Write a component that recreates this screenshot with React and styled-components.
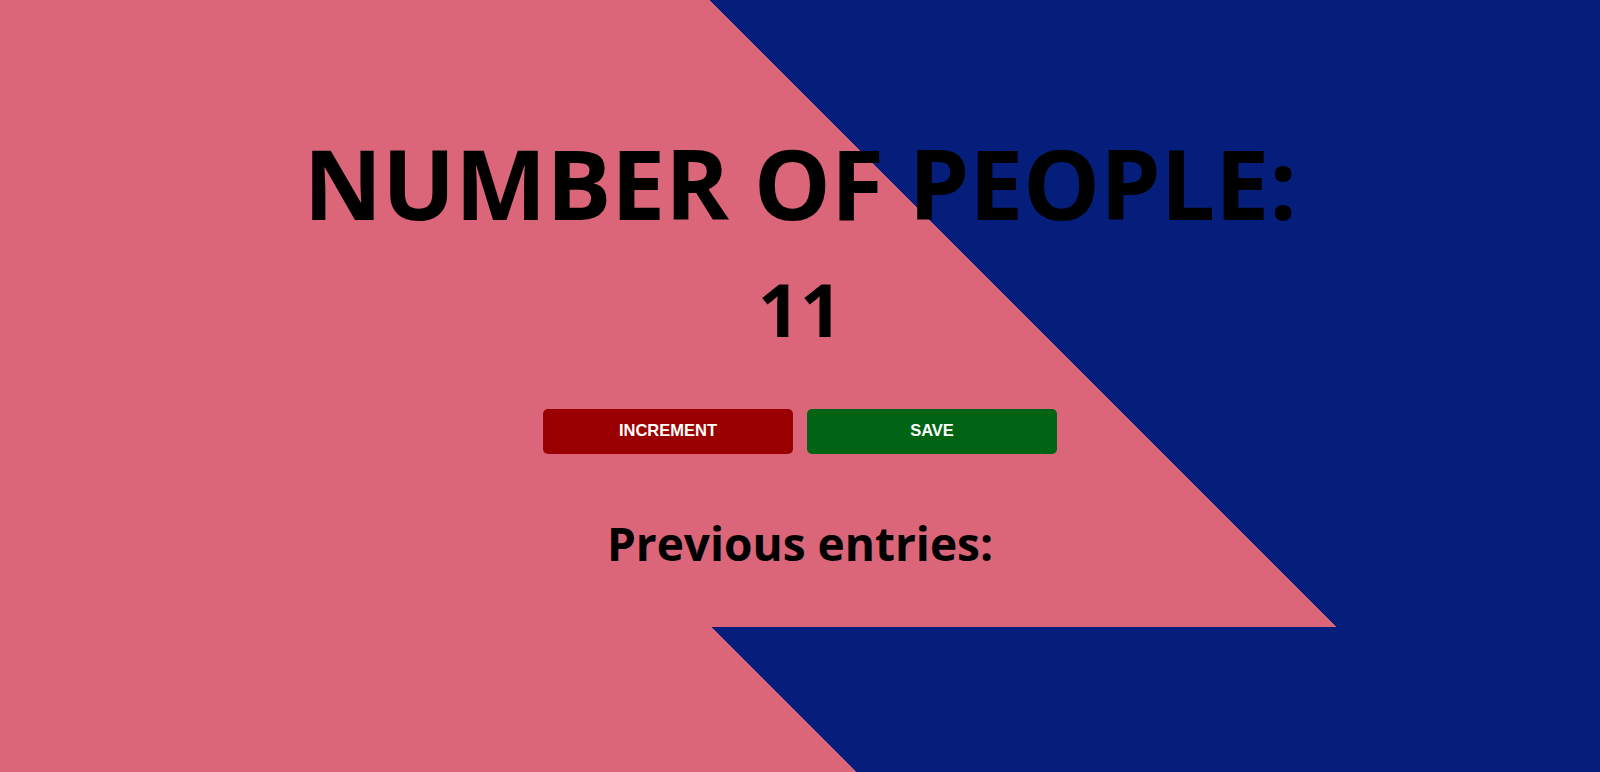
import { useState } from "react";
import styled, { createGlobalStyle } from "styled-components";

const GlobalStyle = createGlobalStyle`
  body {
    margin: 0;
    font-family: "Open Sans", "Noto Sans", sans-serif;
    background-color: #061e7b;
  }
`;

const PINK = "#db6679";
const NAVY = "#061e7b";

export default function App() {
  const [count, setCount] = useState(11);
  const [entries, setEntries] = useState([]);

  return (
    <>
      <GlobalStyle />
      <StyledPage>
        <Hero>
          <Title>NUMBER OF PEOPLE:</Title>
          <Count>{count}</Count>
          <ButtonRow>
            <ActionButton $color="#9b0000" onClick={() => setCount(count + 1)}>
              INCREMENT
            </ActionButton>
            <ActionButton $color="#006414" onClick={() => setEntries([...entries, count])}>
              SAVE
            </ActionButton>
          </ButtonRow>
          <Subtitle>Previous entries:</Subtitle>
          {/* entries.map(...) */}
        </Hero>
        <Band />
      </StyledPage>
    </>
  );
}

const StyledPage = styled.div`
  display: flex;
  flex-direction: column;
  min-height: 772px;
`;

const Hero = styled.section`
  height: 627px;
  box-sizing: border-box;
  padding-top: 134px;
  display: flex;
  flex-direction: column;
  align-items: center;
  background: linear-gradient(45deg, ${PINK} 60%, ${NAVY} 60%);
`;

const Band = styled.div`
  height: 145px;
  background: linear-gradient(45deg, ${PINK} 49.1%, ${NAVY} 49.1%);
`;

const Title = styled.h1`
  margin: 0;
  font-size: 97px;
  line-height: 1;
  font-weight: 700;
  letter-spacing: -0.3px;
  color: #000;
`;

const Count = styled.h2`
  margin: 41px 0 0;
  font-size: 74px;
  line-height: 1;
  font-weight: 700;
  color: #000;
`;

const ButtonRow = styled.div`
  display: flex;
  gap: 14px;
  margin-top: 63px;
`;

const ActionButton = styled.button`
  width: 250px;
  height: 45px;
  padding: 0 0 3px;
  border: none;
  border-radius: 5px;
  background-color: ${(p) => p.$color};
  color: #fff;
  font-family: "Liberation Sans", Arial, sans-serif;
  font-weight: 700;
  font-size: 16.5px;
  cursor: pointer;
`;

const Subtitle = styled.h3`
  margin: 66px 0 0;
  font-size: 46px;
  line-height: 1;
  font-weight: 700;
  color: #000;
`;
